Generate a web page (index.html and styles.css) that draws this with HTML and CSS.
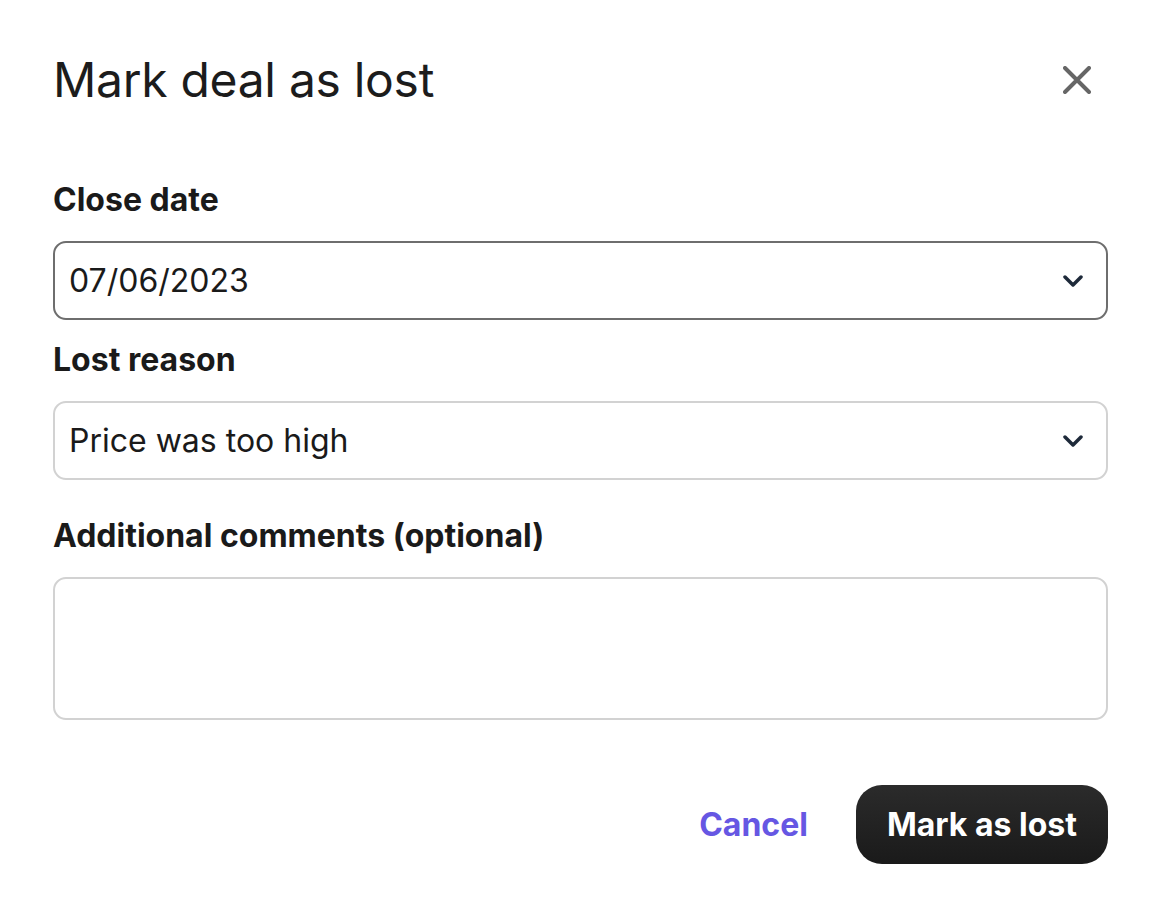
FILE: index.html
```html
<!DOCTYPE html>
<html lang="en">
<head>
<meta charset="utf-8">
<title>Mark deal as lost</title>
<link rel="stylesheet" href="styles.css">
</head>
<body>
<div class="dialog">
  <div class="header">
    <h1 class="title">Mark deal as lost</h1>
    <button class="close" aria-label="Close">
      <svg width="28" height="28" viewBox="0 0 28 28"><path d="M2 2 L26 26 M26 2 L2 26" stroke="#666666" stroke-width="4" stroke-linecap="round" fill="none"/></svg>
    </button>
  </div>
  <div class="field">
    <label class="label">Close date</label>
    <div class="select focused">
      <span class="value">07/06/2023</span>
      <svg class="chevron" width="20" height="12" viewBox="0 0 20 12"><path d="M2 2 L10 10 L18 2" stroke="#1e2a3a" stroke-width="3.5" stroke-linecap="round" stroke-linejoin="round" fill="none"/></svg>
    </div>
  </div>
  <div class="field">
    <label class="label">Lost reason</label>
    <div class="select">
      <span class="value">Price was too high</span>
      <svg class="chevron" width="20" height="12" viewBox="0 0 20 12"><path d="M2 2 L10 10 L18 2" stroke="#1e2a3a" stroke-width="3.5" stroke-linecap="round" stroke-linejoin="round" fill="none"/></svg>
    </div>
  </div>
  <div class="field comments">
    <label class="label">Additional comments (optional)</label>
    <div class="textarea"></div>
  </div>
  <div class="actions">
    <button class="cancel">Cancel</button>
    <button class="primary">Mark as lost</button>
  </div>
</div>
</body>
</html>
```
FILE: styles.css
```css
html, body {
  margin: 0;
  padding: 0;
  background: #ffffff;
}
body {
  font-family: Inter, "Liberation Sans", sans-serif;
  color: #1a1a1a;
}
.dialog {
  padding: 56px 50px 0 53px;
  display: flex;
  flex-direction: column;
}
.header {
  display: flex;
  align-items: center;
  justify-content: space-between;
  height: 48px;
  margin-bottom: 78px;
}
.title {
  margin: 0;
  font-size: 48px;
  line-height: 48px;
  font-weight: 400;
  letter-spacing: -0.3px;
  color: #1c1c1c;
}
.close {
  width: 28px;
  height: 28px;
  padding: 0;
  margin-right: 17px;
  border: none;
  background: none;
  display: flex;
}
.field {
  display: flex;
  flex-direction: column;
  gap: 23px;
  margin-bottom: 22px;
}
.field.comments {
  margin-top: 16px;
  margin-bottom: 65px;
}
.label {
  font-size: 32px;
  line-height: 36px;
  font-weight: 700;
  color: #1a1a1a;
}
.select {
  box-sizing: border-box;
  height: 79px;
  border: 2px solid #d2d2d2;
  border-radius: 13px;
  display: flex;
  align-items: center;
  justify-content: space-between;
  padding: 0 23px 0 14px;
}
.select.focused {
  border-color: #6e6e6e;
}
.value {
  font-size: 32px;
  line-height: 36px;
  color: #1a1a1a;
}
.textarea {
  box-sizing: border-box;
  height: 143px;
  border: 2px solid #d2d2d2;
  border-radius: 13px;
}
.actions {
  display: flex;
  justify-content: flex-end;
  align-items: center;
  gap: 48px;
}
.cancel {
  border: none;
  background: none;
  padding: 0;
  font-family: Inter, "Liberation Sans", sans-serif;
  font-size: 32px;
  font-weight: 700;
  color: #6657e3;
}
.primary {
  height: 79px;
  padding: 0 31px;
  border: none;
  border-radius: 26px;
  background: linear-gradient(#2b2b2b, #1a1a1a);
  color: #ffffff;
  font-family: Inter, "Liberation Sans", sans-serif;
  font-size: 32px;
  font-weight: 700;
}
```
